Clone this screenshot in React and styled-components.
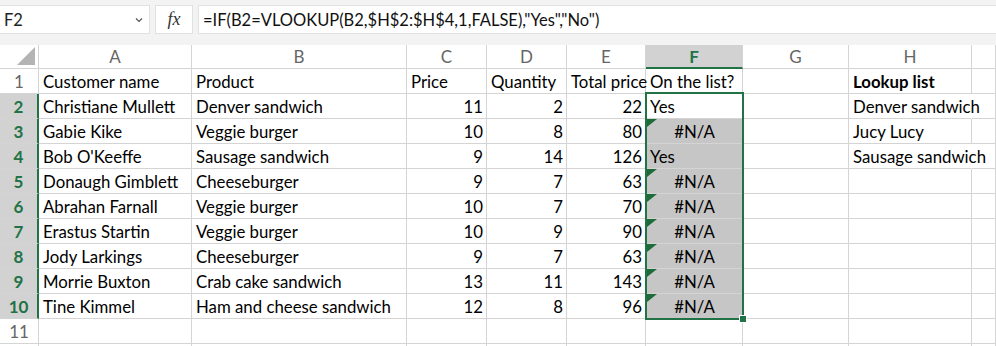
import React from "react";
import styled, { createGlobalStyle, css } from "styled-components";

const GlobalStyle = createGlobalStyle`
  html, body {
    margin: 0;
    padding: 0;
    background: #ffffff;
  }
  body {
    font-family: Lato, "Liberation Sans", sans-serif;
    overflow: hidden;
  }
`;

const GREEN = "#217346";
const GRID = "#d4d4d4";

const Window = styled.div`
  width: 996px;
  height: 346px;
  overflow: hidden;
  background: #f3f3f3;
  display: flex;
  flex-direction: column;
`;

const FormulaBar = styled.div`
  flex-shrink: 0;
  display: flex;
  gap: 5px;
  height: 29px;
  padding: 5px 0 11px 0;
`;

const NameBox = styled.div`
  width: 150px;
  background: #fff;
  border: 1px solid #e1e1e1;
  border-left: none;
  box-sizing: border-box;
  display: flex;
  align-items: center;
  justify-content: space-between;
  padding: 0 5px 0 4px;
  font-size: 16.5px;
  color: #222;
`;

const Chevron = styled.svg`
  width: 10px;
  height: 10px;
`;

const FxBox = styled.div`
  width: 38px;
  background: #fff;
  border: 1px solid #e1e1e1;
  box-sizing: border-box;
  display: flex;
  align-items: center;
  justify-content: center;
  font-family: "Liberation Serif", serif;
  font-style: italic;
  font-size: 18px;
  color: #333;
`;

const FormulaInput = styled.div`
  flex: 1;
  background: #fff;
  border: 1px solid #e1e1e1;
  border-right: none;
  box-sizing: border-box;
  display: flex;
  align-items: center;
  padding-left: 4px;
  font-size: 16.5px;
  color: #111;
  white-space: nowrap;
`;

const SheetArea = styled.div`
  position: relative;
  flex: 1;
  background: #fff;
`;

const Sheet = styled.div`
  display: grid;
  grid-template-columns: 39px 153px 215px 80px 80px 79px 97px 106px 123px 1fr;
  grid-template-rows: 24px repeat(12, 25px);
`;

const HeaderCell = styled.div`
  box-sizing: border-box;
  border-right: 1px solid ${GRID};
  border-bottom: 1px solid ${GRID};
  background: #fff;
  display: flex;
  align-items: center;
  justify-content: center;
  font-size: 17px;
  color: #666;
  ${(p) =>
    p.$active &&
    css`
      background: #d2d2d2;
      color: ${GREEN};
      font-weight: 700;
      border-bottom: 2px solid ${GREEN};
    `}
`;

const Corner = styled(HeaderCell)`
  position: relative;
  &::after {
    content: "";
    position: absolute;
    right: 3px;
    bottom: 3px;
    border-style: solid;
    border-width: 0 0 18px 18px;
    border-color: transparent transparent #b4b4b4 transparent;
  }
`;

const RowHeader = styled.div`
  box-sizing: border-box;
  border-right: 1px solid ${GRID};
  border-bottom: 1px solid ${GRID};
  background: #fff;
  display: flex;
  align-items: center;
  justify-content: center;
  font-size: 17px;
  color: #666;
  ${(p) =>
    p.$active &&
    css`
      background: #d2d2d2;
      color: ${GREEN};
      font-weight: 700;
      border-right: 2px solid ${GREEN};
    `}
`;

const Cell = styled.div`
  position: relative;
  box-sizing: border-box;
  border-right: 1px solid ${(p) => (p.$spill ? "transparent" : GRID)};
  border-bottom: 1px solid ${GRID};
  background: ${(p) => (p.$selected ? "#c6c6c6" : "transparent")};
  display: flex;
  align-items: center;
  justify-content: ${(p) =>
    p.$align === "right" ? "flex-end" : p.$align === "center" ? "center" : "flex-start"};
  padding: 1px 3px 0 4px;
  font-size: 16.8px;
  font-weight: ${(p) => (p.$bold ? 700 : 400)};
  color: #000;
  white-space: nowrap;
  overflow: visible;
  z-index: ${(p) => (p.$spill ? 1 : 0)};
  ${(p) =>
    p.$error &&
    css`
      &::before {
        content: "";
        position: absolute;
        left: 1px;
        top: 0;
        border-style: solid;
        border-width: 8px 10px 0 0;
        border-color: #1e6b3a transparent transparent transparent;
      }
    `}
`;

const Selection = styled.div`
  position: absolute;
  left: 645px;
  top: 47px;
  width: 99px;
  height: 228px;
  box-sizing: border-box;
  border: 2px solid ${GREEN};
  pointer-events: none;
  z-index: 2;
`;

const FillHandle = styled.div`
  position: absolute;
  right: -5px;
  bottom: -5px;
  width: 6px;
  height: 6px;
  background: ${GREEN};
  border: 1px solid #fff;
`;

const columns = ["A", "B", "C", "D", "E", "F", "G", "H", ""];

const orders = [
  ["Christiane Mullett", "Denver sandwich", 11, 2, 22, "Yes"],
  ["Gabie Kike", "Veggie burger", 10, 8, 80, "#N/A"],
  ["Bob O'Keeffe", "Sausage sandwich", 9, 14, 126, "Yes"],
  ["Donaugh Gimblett", "Cheeseburger", 9, 7, 63, "#N/A"],
  ["Abrahan Farnall", "Veggie burger", 10, 7, 70, "#N/A"],
  ["Erastus Startin", "Veggie burger", 10, 9, 90, "#N/A"],
  ["Jody Larkings", "Cheeseburger", 9, 7, 63, "#N/A"],
  ["Morrie Buxton", "Crab cake sandwich", 13, 11, 143, "#N/A"],
  ["Tine Kimmel", "Ham and cheese sandwich", 12, 8, 96, "#N/A"],
];

const lookup = ["Denver sandwich", "Jucy Lucy", "Sausage sandwich"];

const App = () => {
  const rows = [];

  // header row 1
  rows.push(
    <React.Fragment key="r1">
      <RowHeader>1</RowHeader>
      <Cell>Customer name</Cell>
      <Cell>Product</Cell>
      <Cell>Price</Cell>
      <Cell>Quantity</Cell>
      <Cell>Total price</Cell>
      <Cell>On the list?</Cell>
      <Cell />
      <Cell $bold>Lookup list</Cell>
      <Cell />
    </React.Fragment>
  );

  orders.forEach((o, i) => {
    const n = i + 2;
    const h = lookup[i];
    const isError = o[5] === "#N/A";
    rows.push(
      <React.Fragment key={"r" + n}>
        <RowHeader $active>{n}</RowHeader>
        <Cell>{o[0]}</Cell>
        <Cell>{o[1]}</Cell>
        <Cell $align="right">{o[2]}</Cell>
        <Cell $align="right">{o[3]}</Cell>
        <Cell $align="right">{o[4]}</Cell>
        <Cell $selected={n > 2} $error={isError} $align={isError ? "center" : "left"}>
          {o[5]}
        </Cell>
        <Cell />
        <Cell $spill={h && h.length > 12}>{h}</Cell>
        <Cell />
      </React.Fragment>
    );
  });

  // row 11 is visible, row 12 only peeks in below the window edge
  [11, 12].forEach((n) => {
    rows.push(
      <React.Fragment key={"r" + n}>
        <RowHeader>{n === 11 ? n : ""}</RowHeader>
        {columns.map((c, j) => (
          <Cell key={j} />
        ))}
      </React.Fragment>
    );
  });

  return (
    <>
      <GlobalStyle />
      <Window>
        <FormulaBar>
          <NameBox>
            F2
            <Chevron viewBox="0 0 10 10">
              <path d="M2 3.5 L5 6.5 L8 3.5" fill="none" stroke="#555" strokeWidth="1.2" />
            </Chevron>
          </NameBox>
          <FxBox>fx</FxBox>
          <FormulaInput>=IF(B2=VLOOKUP(B2,$H$2:$H$4,1,FALSE),"Yes","No")</FormulaInput>
        </FormulaBar>
        <SheetArea>
          <Sheet>
            <Corner />
            {columns.map((c, j) => (
              <HeaderCell key={j} $active={c === "F"}>
                {c}
              </HeaderCell>
            ))}
            {rows}
          </Sheet>
          <Selection>
            <FillHandle />
          </Selection>
        </SheetArea>
      </Window>
    </>
  );
};

export default App;
